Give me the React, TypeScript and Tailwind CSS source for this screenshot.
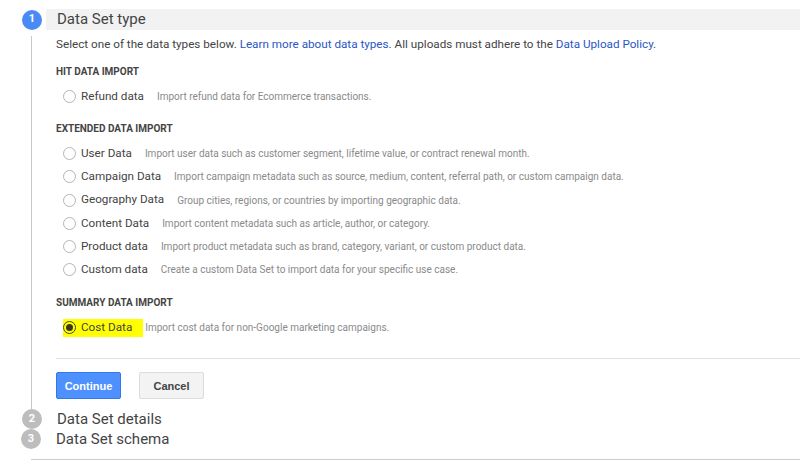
import React from "react";

type Option = {
  label: string;
  desc: string;
};

const hitOptions: Option[] = [
  { label: "Refund data", desc: "Import refund data for Ecommerce transactions." },
];

const extendedOptions: Option[] = [
  { label: "User Data", desc: "Import user data such as customer segment, lifetime value, or contract renewal month." },
  { label: "Campaign Data", desc: "Import campaign metadata such as source, medium, content, referral path, or custom campaign data." },
  { label: "Geography Data", desc: "Group cities, regions, or countries by importing geographic data." },
  { label: "Content Data", desc: "Import content metadata such as article, author, or category." },
  { label: "Product data", desc: "Import product metadata such as brand, category, variant, or custom product data." },
  { label: "Custom data", desc: "Create a custom Data Set to import data for your specific use case." },
];

const Radio = ({ checked = false }: { checked?: boolean }) => (
  <span
    className={
      "flex h-[13px] w-[13px] shrink-0 items-center justify-center rounded-full border " +
      (checked ? "border-[#444] bg-transparent" : "border-[#b5b5b5] bg-white")
    }
  >
    {checked && <span className="h-[7px] w-[7px] rounded-full bg-[#3a3a1a]" />}
  </span>
);

const OptionRow = ({ option }: { option: Option }) => (
  <div className="flex h-[23.2px] items-center pl-[7px]">
    <Radio />
    <span className="ml-[5px] text-[11.7px] text-[#444]">{option.label}</span>
    <span className="ml-[13px] text-[10px] text-[#8a8a8a]">{option.desc}</span>
  </div>
);

const SectionTitle = ({ children }: { children: React.ReactNode }) => (
  <div className="h-[14px] text-[10px] font-bold leading-[14px] text-[#444]">{children}</div>
);

const StepCircle = ({ n, active = false }: { n: number; active?: boolean }) => (
  <div
    className={
      "flex h-[20px] w-[20px] shrink-0 items-center justify-center rounded-full text-[11px] font-bold text-white " +
      (active ? "bg-[#4a8af4]" : "bg-[#bdbdbd]")
    }
  >
    {n}
  </div>
);

export default function App() {
  return (
    <div className="h-[470px] w-[800px] overflow-hidden bg-white pt-[9px] font-['Roboto',sans-serif]">
      {/* Step 1 header */}
      <div className="flex h-[21px] items-center">
        <div className="ml-[22px]">
          <StepCircle n={1} active />
        </div>
        <div className="ml-[4px] flex h-full flex-1 items-center bg-[#f2f2f2] pl-[11px] text-[15px] text-[#444]">
          Data Set type
        </div>
      </div>

      {/* Step 1 body */}
      <div className="ml-[31px] border-l border-[#c8c8c8] pb-[10px] pl-[24px]">
        <p className="mt-[6px] h-[16px] text-[11.7px] leading-[16px] text-[#444]">
          Select one of the data types below.{" "}
          <a className="text-[#2a56c6]">Learn more about data types.</a> All uploads must adhere to the{" "}
          <a className="text-[#2a56c6]">Data Upload Policy</a>.
        </p>

        <div className="mt-[13px]">
          <SectionTitle>HIT DATA IMPORT</SectionTitle>
        </div>
        <div className="mt-[6px]">
          {hitOptions.map((o) => (
            <OptionRow key={o.label} option={o} />
          ))}
        </div>

        <div className="mt-[14px]">
          <SectionTitle>EXTENDED DATA IMPORT</SectionTitle>
        </div>
        <div className="mt-[6px]">
          {extendedOptions.map((o) => (
            <OptionRow key={o.label} option={o} />
          ))}
        </div>

        <div className="mt-[15px]">
          <SectionTitle>SUMMARY DATA IMPORT</SectionTitle>
        </div>
        <div className="mt-[6px] flex h-[23px] items-center pl-[7px]">
          <span className="flex h-[18px] items-center bg-[#ffff00] pr-[11px]">
            <Radio checked />
            <span className="ml-[5px] text-[11.7px] text-[#444]">Cost Data</span>
          </span>
          <span className="ml-[2px] text-[10px] text-[#8a8a8a]">
            Import cost data for non-Google marketing campaigns.
          </span>
        </div>

        <div className="mt-[19px] border-t border-[#e0e0e0]" />

        <div className="mt-[13px] flex gap-[18px] font-['Liberation_Sans',sans-serif] text-[11px] font-bold">
          <button className="h-[27px] w-[65px] rounded-[2px] border border-[#3079ed] bg-[#4d90fe] text-white">
            Continue
          </button>
          <button className="h-[27px] w-[65px] rounded-[2px] border border-[#dcdcdc] bg-[#f3f3f3] text-[#444]">
            Cancel
          </button>
        </div>
      </div>

      {/* Steps 2 and 3 */}
      <div className="flex h-[20px] items-center">
        <div className="ml-[22px]">
          <StepCircle n={2} />
        </div>
        <span className="ml-[15px] text-[15px] text-[#444]">Data Set details</span>
      </div>
      <div className="flex h-[20px] items-center">
        <div className="ml-[21px]">
          <StepCircle n={3} />
        </div>
        <span className="ml-[15px] text-[15px] text-[#444]">Data Set schema</span>
      </div>

      <div className="ml-[31px] mt-[10px] border-t border-[#ccc]" />
    </div>
  );
}
